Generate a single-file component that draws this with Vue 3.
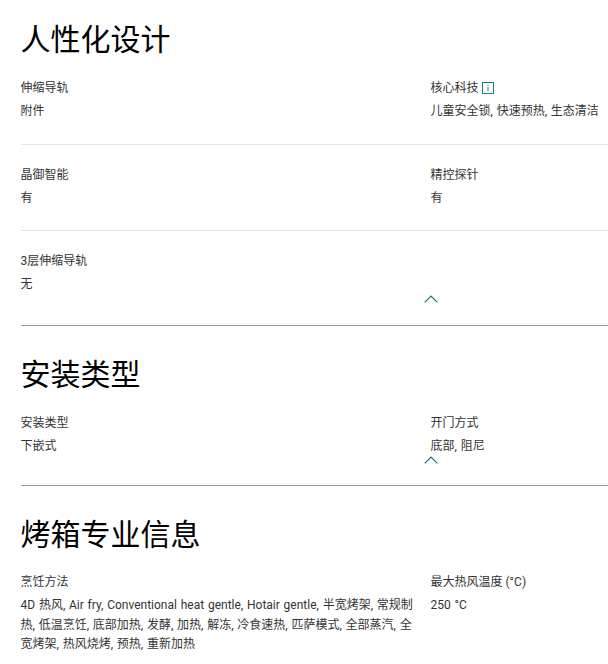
<script setup>
const sections = [
  {
    title: '人性化设计',
    rows: [
      [{ label: '伸缩导轨', value: '附件' }, { label: '核心科技', value: '儿童安全锁, 快速预热, 生态清洁', info: true }],
      [{ label: '晶御智能', value: '有' }, { label: '精控探针', value: '有' }],
      [{ label: '3层伸缩导轨', value: '无' }],
    ],
    cls: 'first',
  },
  {
    title: '安装类型',
    rows: [[{ label: '安装类型', value: '下嵌式' }, { label: '开门方式', value: '底部, 阻尼' }]],
    cls: 'second',
  },
  {
    title: '烤箱专业信息',
    rows: [[
      { label: '烹饪方法', value: '4D 热风, Air fry, Conventional heat gentle, Hotair gentle, 半宽烤架, 常规制热, 低温烹饪, 底部加热, 发酵, 加热, 解冻, 冷食速热, 匹萨模式, 全部蒸汽, 全宽烤架, 热风烧烤, 预热, 重新加热' },
      { label: '最大热风温度 (°C)', value: '250 °C' },
    ]],
    cls: 'third',
    last: true,
  },
]
</script>

<template>
  <main class="page">
    <section v-for="s in sections" :key="s.title" class="section" :class="s.cls">
      <h2 class="title">{{ s.title }}</h2>
      <div v-for="(row, i) in s.rows" :key="i" class="row" :class="{ end: i === s.rows.length - 1 }">
        <div v-for="c in row" :key="c.label" class="cell">
          <div class="label">
            {{ c.label }}
            <svg v-if="c.info" class="info" width="12" height="12" viewBox="0 0 12 12">
              <rect x="0.5" y="0.5" width="11" height="11" fill="none" stroke="#1a7f86" />
              <rect x="5.5" y="5" width="1" height="4" fill="#4d6a6e" />
              <rect x="5.5" y="3" width="1" height="1" fill="#4d6a6e" />
            </svg>
          </div>
          <div class="value">{{ c.value }}</div>
        </div>
      </div>
      <div v-if="!s.last" class="toggle">
        <svg class="chev" width="14" height="8" viewBox="0 0 14 8">
          <path d="M0.7 7.3 L7 1 L13.3 7.3" fill="none" stroke="#1b6f78" stroke-width="1.2" />
        </svg>
      </div>
    </section>
  </main>
</template>

<style>
body { margin: 0; background: #fff; overflow: hidden; }
</style>

<style scoped>
.page {
  width: 608px;
  height: 664px;
  overflow: hidden;
  padding-left: 20.5px;
  box-sizing: border-box;
  font-family: Roboto, "Noto Sans CJK SC", sans-serif;
  color: #333;
}
.section { position: relative; border-bottom: 1px solid #999; }
.section.first { height: 325px; }
.section.second { height: 159px; }
.section.third { border-bottom: 0; }
.title {
  margin: 0;
  height: 79px;
  padding-top: 19px;
  box-sizing: border-box;
  font-size: 30px;
  line-height: 42px;
  font-weight: 400;
  color: #000;
}
.second .title { padding-top: 28px; height: 87.5px; }
.third .title { padding-top: 28px; height: 87px; }
.row {
  display: grid;
  grid-template-columns: 410px 200px;
  height: 64.5px;
  border-bottom: 1px solid #e4e4e8;
  margin-bottom: 21px;
}
.row.end { border-bottom: 0; }
.label {
  display: flex;
  align-items: center;
  gap: 3px;
  font-size: 12px;
  line-height: 18px;
  margin-bottom: 5px;
  white-space: nowrap;
}
.value {
  font-size: 12px;
  line-height: 19.5px;
  width: 397px;
  word-spacing: 0.8px;
}
.cell + .cell .value { white-space: nowrap; width: auto; }
.info { flex: none; }
.toggle { position: absolute; left: 403.5px; top: 295px; line-height: 0; }
.second .toggle { top: 130px; }
</style>
